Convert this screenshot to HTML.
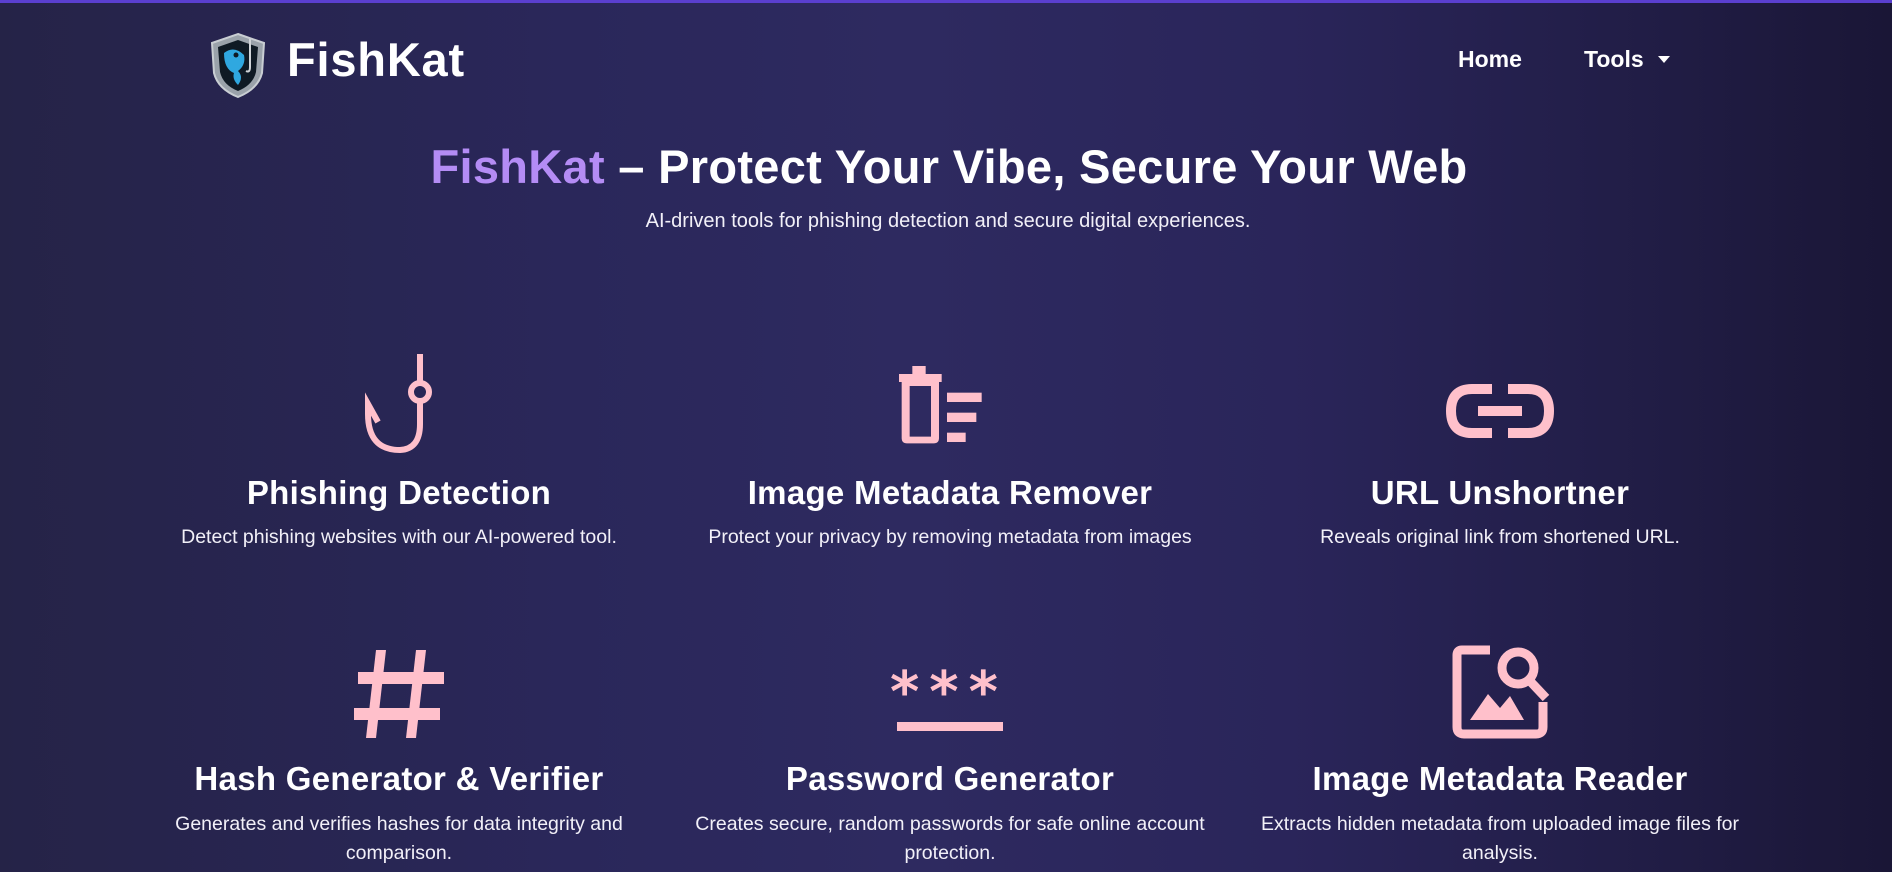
<!DOCTYPE html>
<html><head><meta charset="utf-8"><style>
*{margin:0;padding:0;box-sizing:border-box}
html,body{width:1892px;height:872px;overflow:hidden}
body{font-family:"Liberation Sans",sans-serif;color:#fff;position:relative;
background:linear-gradient(90deg,#252347 0%,#2a275a 30%,#2e2a60 48%,#2a255a 68%,#221e48 85%,#1a1636 100%);}
.topbar{position:absolute;left:0;top:0;width:100%;height:3px;background:#5a3fcf}
.abs{position:absolute}
.c{position:absolute;text-align:center;transform:translateX(-50%);white-space:nowrap}
.t{font-weight:bold;font-size:33px;letter-spacing:0.3px}
.d{font-size:19.5px;color:#f2f0f8;line-height:29px}
</style></head><body>
<div class="topbar"></div>
<svg class="abs" style="left:206px;top:31px" width="64" height="68" viewBox="0 0 64 68">
<path d="M32 3 L58 12 L56 42 Q52 58 32 66 Q12 58 8 42 L6 12 Z" fill="#9aa2aa" stroke="#c9ced3" stroke-width="2"/>
<path d="M32 9 L52 16 L50 41 Q47 54 32 60 Q17 54 14 41 L12 16 Z" fill="#0f1a24"/>
<path d="M18 22 Q28 14 38 24 Q40 34 32 40 Q38 46 32 54 Q26 48 28 42 Q18 38 18 22Z" fill="#2fa8e0"/>
<circle cx="30" cy="24" r="2.5" fill="#0f1a24"/>
<path d="M44 8 V36 Q44 42 40 40" stroke="#d0d4d8" stroke-width="2" fill="none"/>
</svg>
<div class="abs" style="left:287px;top:32px;font-size:47px;font-weight:bold;letter-spacing:0.8px">FishKat</div>
<div class="abs" style="left:1458px;top:46px;font-size:23px;font-weight:bold">Home</div>
<div class="abs" style="left:1584px;top:46px;font-size:23px;font-weight:bold">Tools</div>
<div class="abs" style="left:1658px;top:56px;width:0;height:0;border-left:6px solid transparent;border-right:6px solid transparent;border-top:7px solid #fff"></div>

<div class="c" style="left:949px;top:139px;font-size:47px;font-weight:bold;letter-spacing:0.3px"><span style="color:#b48cf5">FishKat</span> – Protect Your Vibe, Secure Your Web</div>
<div class="c" style="left:948px;top:210px;font-size:20px;color:#f2f0f8">AI-driven tools for phishing detection and secure digital experiences.</div>

<!-- icons row1 -->
<svg class="abs" style="left:360px;top:354px" width="80" height="100" viewBox="0 0 80 100" fill="none" stroke="#ffc0cb" stroke-width="6">
<path d="M60 0 V28"/><circle cx="60" cy="38" r="9"/>
<path d="M60 47 V70 Q60 95 40 96 Q8 96 8 60 L8 50 L18 68"/>
</svg>
<svg class="abs" style="left:896px;top:366px" width="110" height="80" viewBox="0 0 82 60" fill="#ffc0cb">
<rect x="12" y="0" width="10" height="6"/><rect x="2" y="6" width="32" height="6"/>
<path d="M4 12 H32 V54 Q32 58 28 58 H8 Q4 58 4 54Z M10 15 V53 H26 V15Z" fill-rule="evenodd"/>
<rect x="38" y="20" width="26" height="7"/><rect x="38" y="35" width="22" height="7"/><rect x="38" y="50" width="14" height="7"/>
</svg>
<svg class="abs" style="left:1446px;top:384px" width="108" height="54" viewBox="0 0 108 54" fill="none" stroke="#ffc0cb" stroke-width="10">
<path d="M46 5 H26 Q5 5 5 27 Q5 49 26 49 H46"/><path d="M62 5 H82 Q103 5 103 27 Q103 49 82 49 H62"/>
<path d="M32 27 H76"/>
</svg>
<!-- icons row2 -->
<svg class="abs" style="left:352px;top:650px" width="96" height="90" viewBox="0 0 96 90" fill="#ffc0cb">
<polygon points="24,0 34,0 24,88 14,88"/><polygon points="64,0 74,0 64,88 54,88"/>
<rect x="6" y="22" width="86" height="12"/><rect x="2" y="58" width="86" height="12"/>
</svg>
<div class="abs" style="left:890px;top:660px;width:130px;font-size:56px;font-weight:bold;color:#ffc0cb;letter-spacing:10px;font-family:'DejaVu Sans',sans-serif">***</div>
<div class="abs" style="left:897px;top:722px;width:106px;height:9px;background:#ffc0cb"></div>
<svg class="abs" style="left:1452px;top:642px" width="104" height="100" viewBox="0 0 104 100" fill="none" stroke="#ffc0cb" stroke-width="9">
<path d="M38 8 H10 Q5 8 5 13 V85 Q5 92 12 92 H84 Q91 92 91 85 V60"/>
<circle cx="66" cy="26" r="16"/><path d="M77 38 L94 56"/>
<path d="M18 78 L36 52 L48 66 L58 54 L72 78Z" fill="#ffc0cb" stroke="none"/>
</svg>

<div class="c t" style="left:399px;top:474px">Phishing Detection</div>
<div class="c d" style="left:399px;top:523px">Detect phishing websites with our AI-powered tool.</div>
<div class="c t" style="left:950px;top:474px">Image Metadata Remover</div>
<div class="c d" style="left:950px;top:523px">Protect your privacy by removing metadata from images</div>
<div class="c t" style="left:1500px;top:474px">URL Unshortner</div>
<div class="c d" style="left:1500px;top:523px">Reveals original link from shortened URL.</div>

<div class="c t" style="left:399px;top:760px">Hash Generator &amp; Verifier</div>
<div class="c d" style="left:399px;top:810px">Generates and verifies hashes for data integrity and<br>comparison.</div>
<div class="c t" style="left:950px;top:760px">Password Generator</div>
<div class="c d" style="left:950px;top:810px">Creates secure, random passwords for safe online account<br>protection.</div>
<div class="c t" style="left:1500px;top:760px">Image Metadata Reader</div>
<div class="c d" style="left:1500px;top:810px">Extracts hidden metadata from uploaded image files for<br>analysis.</div>
</body></html>
